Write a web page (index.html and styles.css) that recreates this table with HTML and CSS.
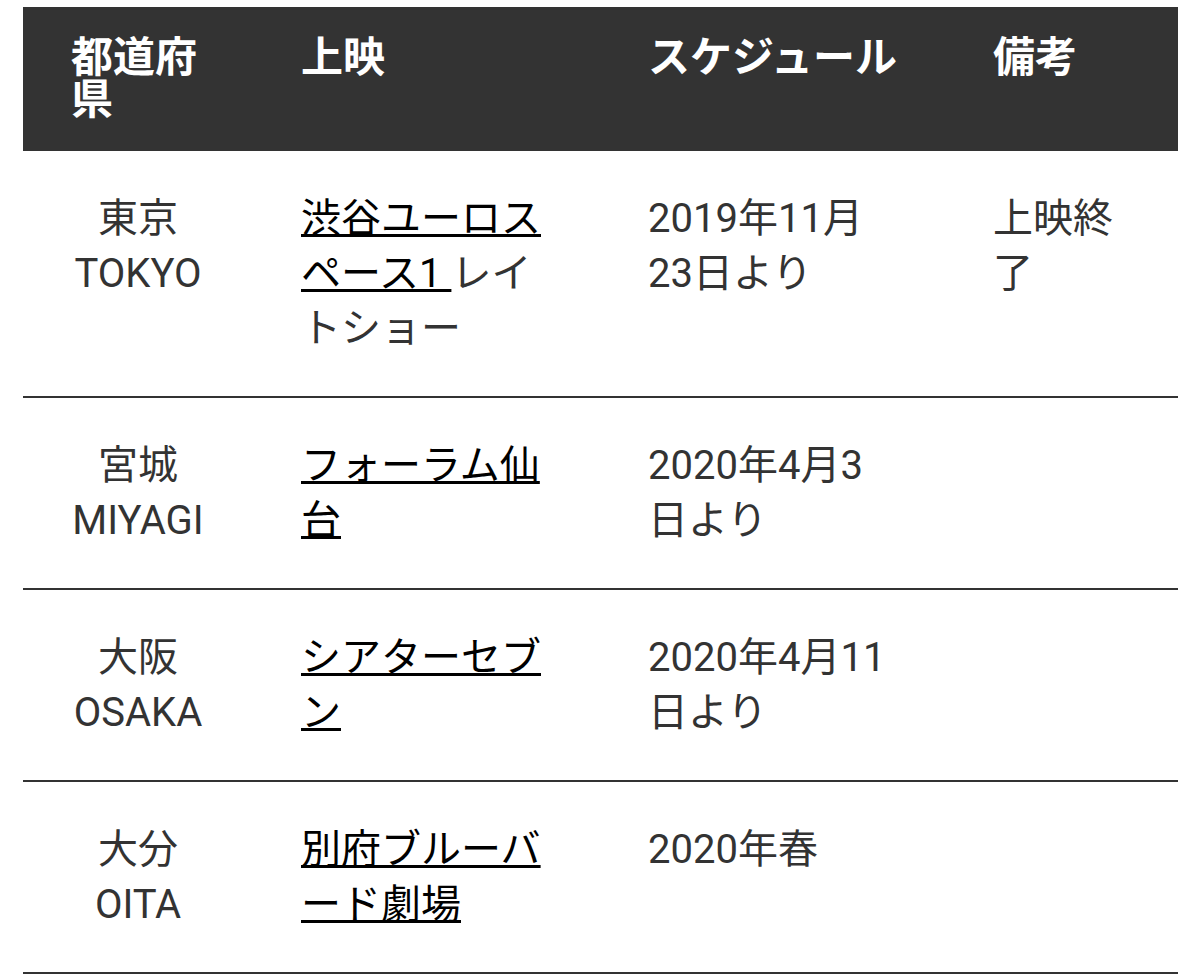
FILE: index.html
```html
<!DOCTYPE html>
<html lang="ja">
<head>
<meta charset="utf-8">
<title>上映スケジュール</title>
<link rel="stylesheet" href="styles.css">
</head>
<body>
<div class="page">
  <table class="schedule">
    <colgroup>
      <col class="c-pref">
      <col class="c-theater">
      <col class="c-date">
      <col class="c-note">
    </colgroup>
    <thead>
      <tr>
        <th>都道府県</th>
        <th>上映</th>
        <th>スケジュール</th>
        <th>備考</th>
      </tr>
    </thead>
    <tbody>
      <tr>
        <td class="pref">東京<br>TOKYO</td>
        <td><a href="#">渋谷ユーロスペース1 </a>レイトショー</td>
        <td>2019年11月23日より</td>
        <td>上映終了</td>
      </tr>
      <tr>
        <td class="pref">宮城<br>MIYAGI</td>
        <td><a href="#">フォーラム仙台</a></td>
        <td>2020年4月3日より</td>
        <td></td>
      </tr>
      <tr>
        <td class="pref">大阪<br>OSAKA</td>
        <td><a href="#">シアターセブン</a></td>
        <td>2020年4月11日より</td>
        <td></td>
      </tr>
      <tr>
        <td class="pref">大分<br>OITA</td>
        <td><a href="#">別府ブルーバード劇場</a></td>
        <td>2020年春</td>
        <td></td>
      </tr>
    </tbody>
  </table>
</div>
</body>
</html>
```

FILE: styles.css
```css
html, body {
  margin: 0;
  padding: 0;
  background: #ffffff;
}

.page {
  padding: 7px 22px 0 23px;
  font-family: Roboto, "Noto Sans CJK JP", sans-serif;
  color: #333333;
}

.schedule {
  width: 1155px;
  border-collapse: collapse;
  table-layout: fixed;
  font-size: 40px;
}

.c-pref { width: 230px; }
.c-theater { width: 347px; }
.c-date { width: 345px; }
.c-note { width: 233px; }

.schedule th {
  background: #333333;
  color: #ffffff;
  font-size: 42px;
  font-weight: 700;
  text-align: left;
  vertical-align: top;
  line-height: 42px;
  padding: 30px 46px 30px 48px;
}

.schedule td {
  vertical-align: top;
  text-align: left;
  line-height: 55px;
  padding: 40px 48px 40px 48px;
  border-bottom: 2px solid #333333;
}

.schedule td.pref {
  text-align: center;
}

.schedule a {
  color: #000000;
  text-decoration: underline;
  text-decoration-thickness: 3px;
}
```
